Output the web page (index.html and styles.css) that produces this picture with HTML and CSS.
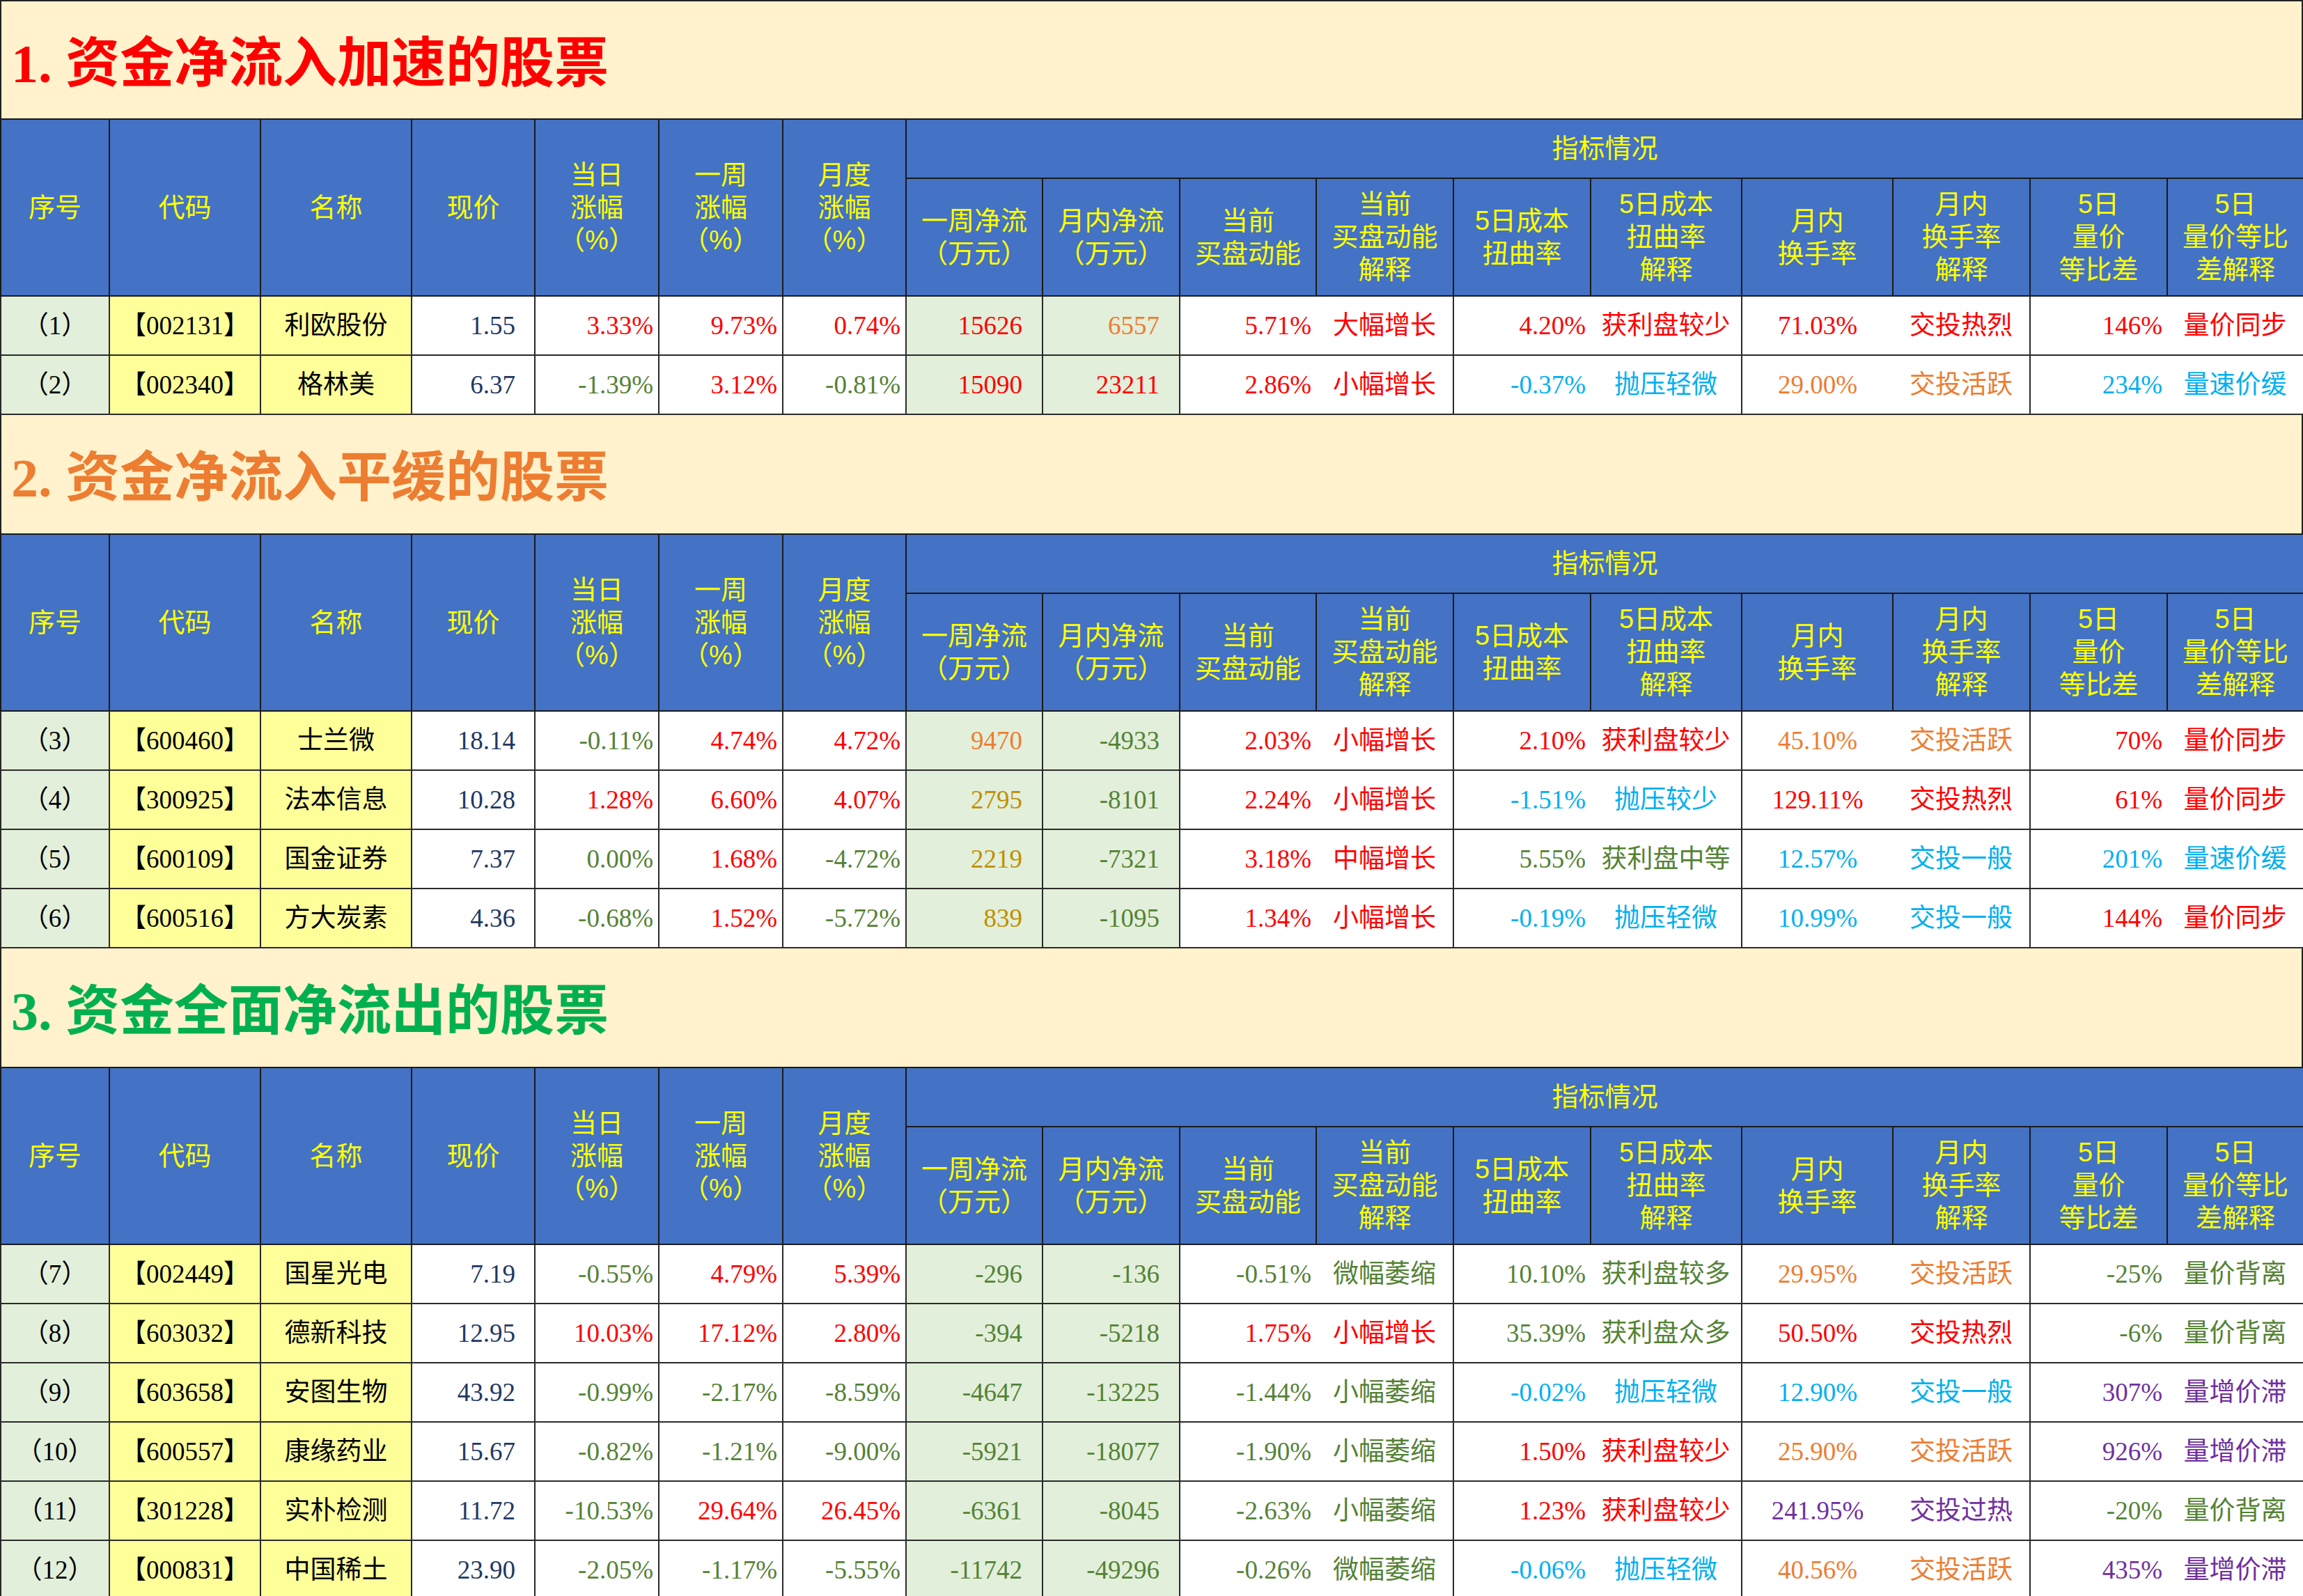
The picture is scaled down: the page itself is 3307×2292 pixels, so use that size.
FILE: index.html
```html
<!DOCTYPE html>
<html lang="zh-CN">
<head>
<meta charset="utf-8">
<title>资金流向股票</title>
<link rel="stylesheet" href="styles.css">
</head>
<body>
<div class="page">

<section class="sec">
  <div class="title t1">1. 资金净流入加速的股票</div>
  <table class="tb">
    <colgroup>
      <col class="w156"><col class="w217"><col class="w217"><col class="w177"><col class="w178"><col class="w178"><col class="w177">
      <col class="w196"><col class="w197"><col class="w196"><col class="w197"><col class="w197"><col class="w217"><col class="w217"><col class="w197"><col class="w197"><col class="w196">
    </colgroup>
    <thead>
      <tr class="h1">
        <th rowspan="2">序号</th><th rowspan="2">代码</th><th rowspan="2">名称</th><th rowspan="2">现价</th>
        <th rowspan="2">当日<br>涨幅<br>（%）</th><th rowspan="2">一周<br>涨幅<br>（%）</th><th rowspan="2">月度<br>涨幅<br>（%）</th>
        <th colspan="10">指标情况</th>
      </tr>
      <tr class="h2">
        <th>一周净流<br>（万元）</th><th>月内净流<br>（万元）</th><th>当前<br>买盘动能</th><th>当前<br>买盘动能<br>解释</th>
        <th>5日成本<br>扭曲率</th><th>5日成本<br>扭曲率<br>解释</th><th>月内<br>换手率</th><th>月内<br>换手率<br>解释</th>
        <th>5日<br>量价<br>等比差</th><th>5日<br>量价等比<br>差解释</th>
      </tr>
    </thead>
    <tbody>
      <tr class="d"><td class="sn">（1）</td><td class="cd">【002131】</td><td class="cd">利欧股份</td><td class="pr n">1.55</td><td class="pc r">3.33%</td><td class="pc r">9.73%</td><td class="pc r">0.74%</td><td class="nf r">15626</td><td class="nf o">6557</td><td class="v r">5.71%</td><td class="x r">大幅增长</td><td class="v r">4.20%</td><td class="x r">获利盘较少</td><td class="vc r">71.03%</td><td class="x r">交投热烈</td><td class="v r">146%</td><td class="x r">量价同步</td></tr>
      <tr class="d"><td class="sn">（2）</td><td class="cd">【002340】</td><td class="cd">格林美</td><td class="pr n">6.37</td><td class="pc g">-1.39%</td><td class="pc r">3.12%</td><td class="pc g">-0.81%</td><td class="nf r">15090</td><td class="nf r">23211</td><td class="v r">2.86%</td><td class="x r">小幅增长</td><td class="v b">-0.37%</td><td class="x b">抛压轻微</td><td class="vc o">29.00%</td><td class="x o">交投活跃</td><td class="v b">234%</td><td class="x b">量速价缓</td></tr>
    </tbody>
  </table>
</section>

<section class="sec">
  <div class="title t2">2. 资金净流入平缓的股票</div>
  <table class="tb">
    <colgroup>
      <col class="w156"><col class="w217"><col class="w217"><col class="w177"><col class="w178"><col class="w178"><col class="w177">
      <col class="w196"><col class="w197"><col class="w196"><col class="w197"><col class="w197"><col class="w217"><col class="w217"><col class="w197"><col class="w197"><col class="w196">
    </colgroup>
    <thead>
      <tr class="h1">
        <th rowspan="2">序号</th><th rowspan="2">代码</th><th rowspan="2">名称</th><th rowspan="2">现价</th>
        <th rowspan="2">当日<br>涨幅<br>（%）</th><th rowspan="2">一周<br>涨幅<br>（%）</th><th rowspan="2">月度<br>涨幅<br>（%）</th>
        <th colspan="10">指标情况</th>
      </tr>
      <tr class="h2">
        <th>一周净流<br>（万元）</th><th>月内净流<br>（万元）</th><th>当前<br>买盘动能</th><th>当前<br>买盘动能<br>解释</th>
        <th>5日成本<br>扭曲率</th><th>5日成本<br>扭曲率<br>解释</th><th>月内<br>换手率</th><th>月内<br>换手率<br>解释</th>
        <th>5日<br>量价<br>等比差</th><th>5日<br>量价等比<br>差解释</th>
      </tr>
    </thead>
    <tbody>
      <tr class="d"><td class="sn">（3）</td><td class="cd">【600460】</td><td class="cd">士兰微</td><td class="pr n">18.14</td><td class="pc g">-0.11%</td><td class="pc r">4.74%</td><td class="pc r">4.72%</td><td class="nf o">9470</td><td class="nf g">-4933</td><td class="v r">2.03%</td><td class="x r">小幅增长</td><td class="v r">2.10%</td><td class="x r">获利盘较少</td><td class="vc o">45.10%</td><td class="x o">交投活跃</td><td class="v r">70%</td><td class="x r">量价同步</td></tr>
      <tr class="d"><td class="sn">（4）</td><td class="cd">【300925】</td><td class="cd">法本信息</td><td class="pr n">10.28</td><td class="pc r">1.28%</td><td class="pc r">6.60%</td><td class="pc r">4.07%</td><td class="nf y">2795</td><td class="nf g">-8101</td><td class="v r">2.24%</td><td class="x r">小幅增长</td><td class="v b">-1.51%</td><td class="x b">抛压较少</td><td class="vc r">129.11%</td><td class="x r">交投热烈</td><td class="v r">61%</td><td class="x r">量价同步</td></tr>
      <tr class="d"><td class="sn">（5）</td><td class="cd">【600109】</td><td class="cd">国金证券</td><td class="pr n">7.37</td><td class="pc g">0.00%</td><td class="pc r">1.68%</td><td class="pc g">-4.72%</td><td class="nf y">2219</td><td class="nf g">-7321</td><td class="v r">3.18%</td><td class="x r">中幅增长</td><td class="v g">5.55%</td><td class="x g">获利盘中等</td><td class="vc b">12.57%</td><td class="x b">交投一般</td><td class="v b">201%</td><td class="x b">量速价缓</td></tr>
      <tr class="d"><td class="sn">（6）</td><td class="cd">【600516】</td><td class="cd">方大炭素</td><td class="pr n">4.36</td><td class="pc g">-0.68%</td><td class="pc r">1.52%</td><td class="pc g">-5.72%</td><td class="nf y">839</td><td class="nf g">-1095</td><td class="v r">1.34%</td><td class="x r">小幅增长</td><td class="v b">-0.19%</td><td class="x b">抛压轻微</td><td class="vc b">10.99%</td><td class="x b">交投一般</td><td class="v r">144%</td><td class="x r">量价同步</td></tr>
    </tbody>
  </table>
</section>

<section class="sec">
  <div class="title t3">3. 资金全面净流出的股票</div>
  <table class="tb">
    <colgroup>
      <col class="w156"><col class="w217"><col class="w217"><col class="w177"><col class="w178"><col class="w178"><col class="w177">
      <col class="w196"><col class="w197"><col class="w196"><col class="w197"><col class="w197"><col class="w217"><col class="w217"><col class="w197"><col class="w197"><col class="w196">
    </colgroup>
    <thead>
      <tr class="h1">
        <th rowspan="2">序号</th><th rowspan="2">代码</th><th rowspan="2">名称</th><th rowspan="2">现价</th>
        <th rowspan="2">当日<br>涨幅<br>（%）</th><th rowspan="2">一周<br>涨幅<br>（%）</th><th rowspan="2">月度<br>涨幅<br>（%）</th>
        <th colspan="10">指标情况</th>
      </tr>
      <tr class="h2">
        <th>一周净流<br>（万元）</th><th>月内净流<br>（万元）</th><th>当前<br>买盘动能</th><th>当前<br>买盘动能<br>解释</th>
        <th>5日成本<br>扭曲率</th><th>5日成本<br>扭曲率<br>解释</th><th>月内<br>换手率</th><th>月内<br>换手率<br>解释</th>
        <th>5日<br>量价<br>等比差</th><th>5日<br>量价等比<br>差解释</th>
      </tr>
    </thead>
    <tbody>
      <tr class="d"><td class="sn">（7）</td><td class="cd">【002449】</td><td class="cd">国星光电</td><td class="pr n">7.19</td><td class="pc g">-0.55%</td><td class="pc r">4.79%</td><td class="pc r">5.39%</td><td class="nf g">-296</td><td class="nf g">-136</td><td class="v g">-0.51%</td><td class="x g">微幅萎缩</td><td class="v g">10.10%</td><td class="x g">获利盘较多</td><td class="vc o">29.95%</td><td class="x o">交投活跃</td><td class="v g">-25%</td><td class="x g">量价背离</td></tr>
      <tr class="d"><td class="sn">（8）</td><td class="cd">【603032】</td><td class="cd">德新科技</td><td class="pr n">12.95</td><td class="pc r">10.03%</td><td class="pc r">17.12%</td><td class="pc r">2.80%</td><td class="nf g">-394</td><td class="nf g">-5218</td><td class="v r">1.75%</td><td class="x r">小幅增长</td><td class="v g">35.39%</td><td class="x g">获利盘众多</td><td class="vc r">50.50%</td><td class="x r">交投热烈</td><td class="v g">-6%</td><td class="x g">量价背离</td></tr>
      <tr class="d"><td class="sn">（9）</td><td class="cd">【603658】</td><td class="cd">安图生物</td><td class="pr n">43.92</td><td class="pc g">-0.99%</td><td class="pc g">-2.17%</td><td class="pc g">-8.59%</td><td class="nf g">-4647</td><td class="nf g">-13225</td><td class="v g">-1.44%</td><td class="x g">小幅萎缩</td><td class="v b">-0.02%</td><td class="x b">抛压轻微</td><td class="vc b">12.90%</td><td class="x b">交投一般</td><td class="v p">307%</td><td class="x p">量增价滞</td></tr>
      <tr class="d"><td class="sn">（10）</td><td class="cd">【600557】</td><td class="cd">康缘药业</td><td class="pr n">15.67</td><td class="pc g">-0.82%</td><td class="pc g">-1.21%</td><td class="pc g">-9.00%</td><td class="nf g">-5921</td><td class="nf g">-18077</td><td class="v g">-1.90%</td><td class="x g">小幅萎缩</td><td class="v r">1.50%</td><td class="x r">获利盘较少</td><td class="vc o">25.90%</td><td class="x o">交投活跃</td><td class="v p">926%</td><td class="x p">量增价滞</td></tr>
      <tr class="d"><td class="sn">（11）</td><td class="cd">【301228】</td><td class="cd">实朴检测</td><td class="pr n">11.72</td><td class="pc g">-10.53%</td><td class="pc r">29.64%</td><td class="pc r">26.45%</td><td class="nf g">-6361</td><td class="nf g">-8045</td><td class="v g">-2.63%</td><td class="x g">小幅萎缩</td><td class="v r">1.23%</td><td class="x r">获利盘较少</td><td class="vc p">241.95%</td><td class="x p">交投过热</td><td class="v g">-20%</td><td class="x g">量价背离</td></tr>
      <tr class="d"><td class="sn">（12）</td><td class="cd">【000831】</td><td class="cd">中国稀土</td><td class="pr n">23.90</td><td class="pc g">-2.05%</td><td class="pc g">-1.17%</td><td class="pc g">-5.55%</td><td class="nf g">-11742</td><td class="nf g">-49296</td><td class="v g">-0.26%</td><td class="x g">微幅萎缩</td><td class="v b">-0.06%</td><td class="x b">抛压轻微</td><td class="vc o">40.56%</td><td class="x o">交投活跃</td><td class="v p">435%</td><td class="x p">量增价滞</td></tr>
    </tbody>
  </table>
</section>

</div>
</body>
</html>
```

FILE: styles.css
```css
html, body {
  margin: 0;
  padding: 0;
  background: #ffffff;
}

.page {
  width: 3307px;
  font-family: "Liberation Serif", "Noto Sans CJK SC", serif;
}

.sec {
  display: block;
}

.title {
  height: 170px;
  box-sizing: border-box;
  background: #FFF2CC;
  border-left: 2px solid #222;
  border-right: 2px solid #222;
  display: flex;
  align-items: center;
  padding: 12px 0 0 14px;
  font-family: "Liberation Serif", "Noto Sans CJK SC", serif;
  font-size: 78px;
  font-weight: 700;
  line-height: 1;
  white-space: nowrap;
}

.sec:first-child .title {
  border-top: 2px solid #222;
}

.t1 { color: #FF0000; }
.t2 { color: #ED7D31; }
.t3 { color: #00B050; }

.tb {
  width: 3307px;
  table-layout: fixed;
  border-collapse: collapse;
}

.w156 { width: 156px; }
.w177 { width: 177px; }
.w178 { width: 178px; }
.w196 { width: 196px; }
.w197 { width: 197px; }
.w217 { width: 217px; }

.tb th {
  background: #4472C4;
  color: #FFFF00;
  font-family: "Liberation Sans", "Noto Sans CJK SC", sans-serif;
  font-weight: 400;
  font-size: 38px;
  line-height: 47px;
  border: 2px solid #1a1a1a;
  padding: 0;
  text-align: center;
  vertical-align: middle;
  white-space: nowrap;
}

.h1 { height: 85px; }
.h2 { height: 169px; }
.d { height: 85px; }

.tb td {
  border: 2px solid #2a2a2a;
  padding: 0;
  font-size: 37px;
  line-height: 42px;
  vertical-align: middle;
  white-space: nowrap;
  background: #ffffff;
  color: #000000;
}

.tb td.sn {
  background: #E2EFDA;
  text-align: center;
}

.tb td.cd {
  background: #FFFF99;
  text-align: center;
}

.tb td.pr {
  text-align: right;
  padding-right: 27px;
}

.tb td.pc {
  text-align: right;
  padding-right: 7px;
}

.tb td.nf {
  background: #E2EFDA;
  text-align: right;
  padding-right: 28px;
}

.tb td.v {
  text-align: right;
  padding-right: 7px;
  border-right: none;
}

.tb td.vc {
  text-align: center;
  border-right: none;
}

.tb td.x {
  text-align: center;
  border-left: none;
}

.tb td.n { color: #203864; }
.tb td.r { color: #FF0000; }
.tb td.g { color: #548235; }
.tb td.o { color: #ED7D31; }
.tb td.y { color: #BF8F00; }
.tb td.b { color: #00B0F0; }
.tb td.p { color: #7030A0; }
```
